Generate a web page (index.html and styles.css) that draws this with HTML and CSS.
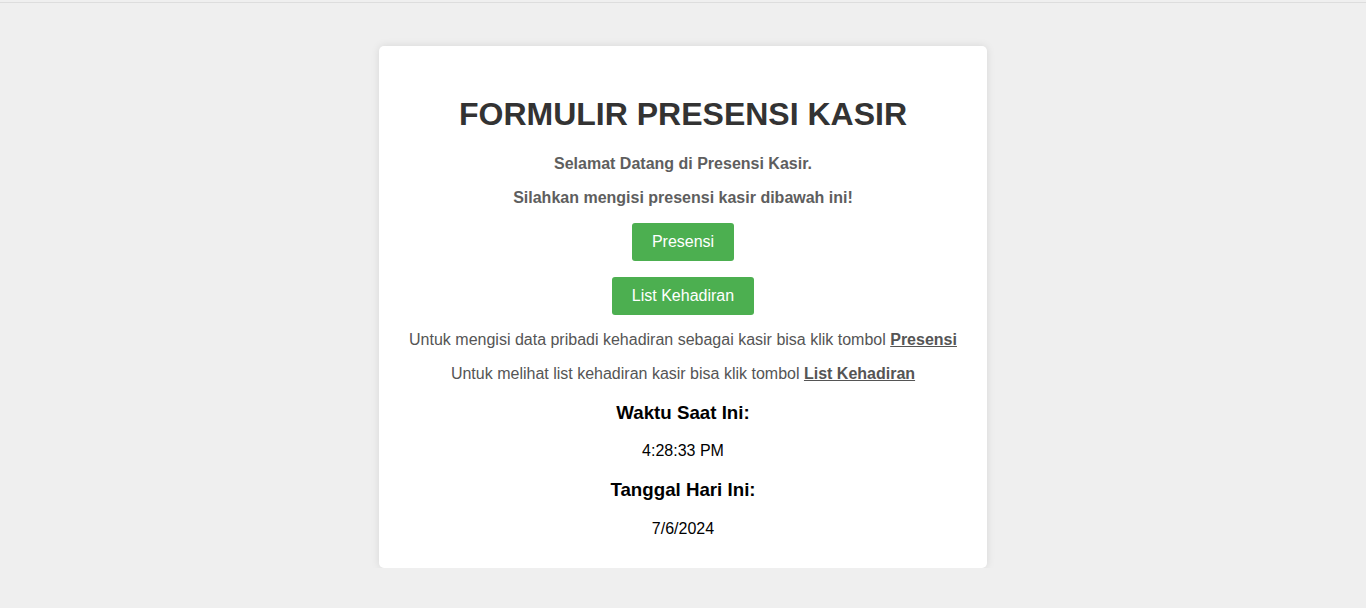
FILE: index.html
```html
<!DOCTYPE html>
<html lang="id">
<head>
<meta charset="utf-8">
<title>Formulir Presensi Kasir</title>
<link rel="stylesheet" href="styles.css">
</head>
<body>
<div class="topline"></div>
<main class="card">
  <h1 class="title">FORMULIR PRESENSI KASIR</h1>
  <p class="lead">Selamat Datang di Presensi Kasir.</p>
  <p class="lead">Silahkan mengisi presensi kasir dibawah ini!</p>
  <div class="actions">
    <a class="btn" href="#">Presensi</a>
    <a class="btn" href="#">List Kehadiran</a>
  </div>
  <p class="info">Untuk mengisi data pribadi kehadiran sebagai kasir bisa klik tombol <a class="link" href="#">Presensi</a></p>
  <p class="info">Untuk melihat list kehadiran kasir bisa klik tombol <a class="link" href="#">List Kehadiran</a></p>
  <h3 class="sub">Waktu Saat Ini:</h3>
  <p class="value">4:28:33 PM</p>
  <h3 class="sub">Tanggal Hari Ini:</h3>
  <p class="value">7/6/2024</p>
</main>
</body>
</html>
```
FILE: styles.css
```css
html, body {
  margin: 0;
  padding: 0;
}
body {
  background: #efefef;
  font-family: "Liberation Sans", Arial, sans-serif;
  color: #333;
}
.topline {
  height: 2px;
  border-bottom: 1px solid #dddddd;
}
.card {
  box-sizing: border-box;
  width: 608px;
  margin: 43px auto 0;
  padding: 29px 20px 14px;
  background: #fff;
  border-radius: 5px;
  box-shadow: 0 0 8px rgba(0, 0, 0, 0.1);
  text-align: center;
}
.title {
  font-size: 32px;
  font-weight: bold;
  color: #333;
  margin: 21.44px 0;
}
.lead {
  font-size: 16px;
  font-weight: bold;
  color: #5e5e5e;
  margin: 16px 0;
}
.actions {
  display: flex;
  flex-direction: column;
  align-items: center;
  gap: 16px;
  margin: 16px 0;
}
.btn {
  display: inline-block;
  background: #4caf50;
  color: #fff;
  text-decoration: none;
  font-size: 16px;
  padding: 10px 20px;
  border-radius: 3px;
}
.info {
  font-size: 16px;
  color: #555;
  margin: 16px 0;
}
.link {
  color: #555;
  font-weight: bold;
  text-decoration: underline;
}
.sub {
  font-size: 18.72px;
  font-weight: bold;
  color: #000;
  margin: 18.72px 0;
}
.value {
  font-size: 16px;
  color: #000;
  margin: 16px 0;
}
```
